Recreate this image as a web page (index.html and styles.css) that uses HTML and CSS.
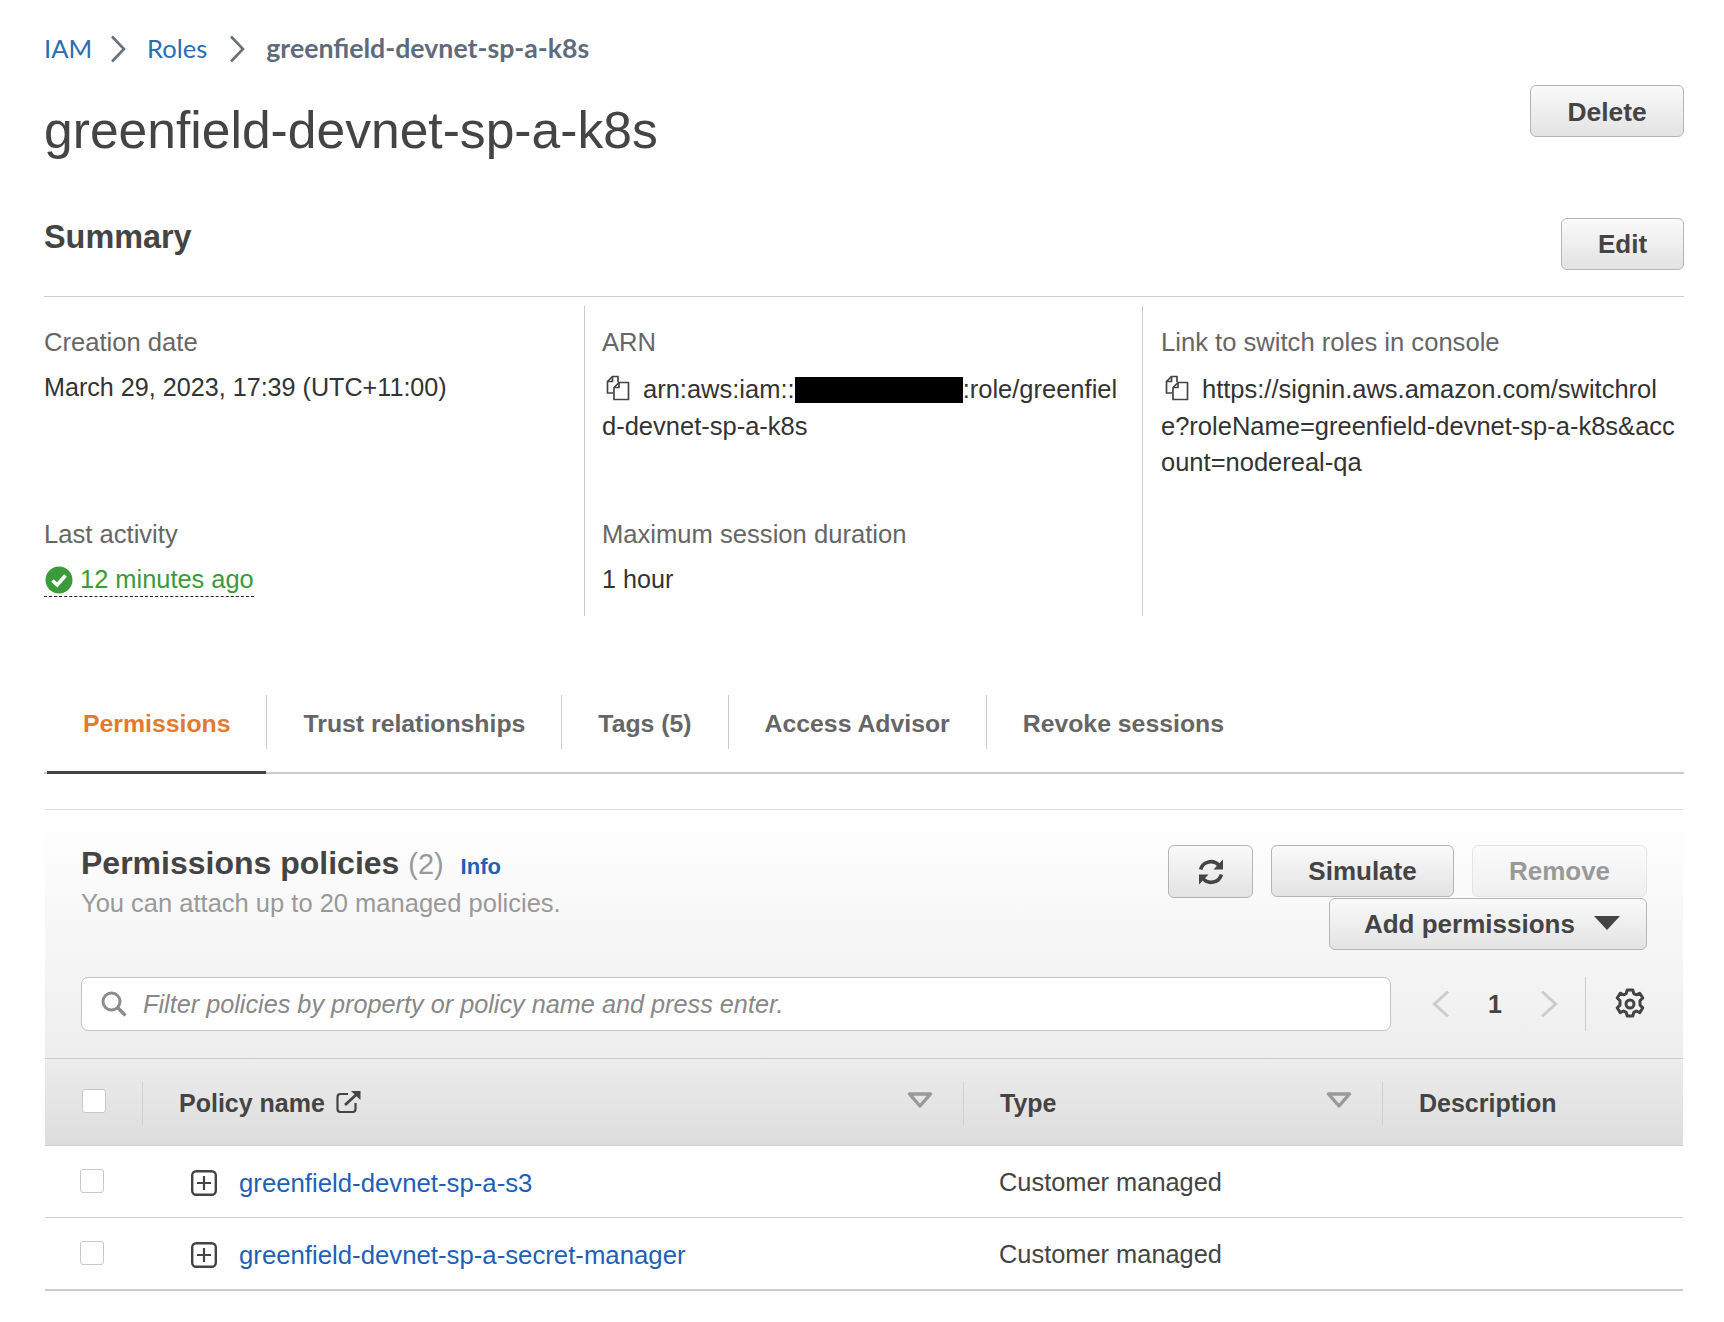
FILE: index.html
```html
<!DOCTYPE html>
<html lang="en">
<head>
  <meta charset="UTF-8" />
  <title>greenfield-devnet-sp-a-k8s</title>
  <link rel="stylesheet" href="styles.css">
</head>
<body>
  <nav class="crumbs">
    <a class="crumb-first" href="#">IAM</a>
    <svg class="crumb-sep" viewBox="0 0 16 28"><path d="M2 1.5 14 14 2 26.5" /></svg>
    <a class="crumb-mid" href="#">Roles</a>
    <svg class="crumb-sep" viewBox="0 0 16 28"><path d="M2 1.5 14 14 2 26.5" /></svg>
    <span class="crumb-current">greenfield-devnet-sp-a-k8s</span>
  </nav>

  <div class="title-row">
    <h1>greenfield-devnet-sp-a-k8s</h1>
    <button class="btn btn-delete">Delete</button>
  </div>

  <div class="summary-head">
    <h2>Summary</h2>
    <button class="btn btn-edit">Edit</button>
  </div>

  <div class="summary">
    <div class="col">
      <div class="item">
        <div class="label">Creation date</div>
        <div class="value">March 29, 2023, 17:39 (UTC+11:00)</div>
      </div>
      <div class="item">
        <div class="label">Last activity</div>
        <div class="value value-activity">
          <span class="activity">
            <svg class="check" viewBox="0 0 28 28"><circle cx="14" cy="14" r="13.5" fill="#3b9a3a" /><path d="M7.5 14.5 12.2 19 20.5 9.5" fill="none" stroke="#fff" stroke-width="3.6" /></svg>
            12 minutes ago
          </span>
        </div>
      </div>
    </div>
    <div class="col col-mid">
      <div class="item">
        <div class="label">ARN</div>
        <div class="value value-wrap">
          <svg class="copy" viewBox="0 0 25 26"><use href="#copy-icon" /></svg>arn:aws:iam::<span class="redacted"></span>:role/greenfield-devnet-sp-a-k8s
        </div>
      </div>
      <div class="item">
        <div class="label">Maximum session duration</div>
        <div class="value">1 hour</div>
      </div>
    </div>
    <div class="col col-last">
      <div class="item">
        <div class="label">Link to switch roles in console</div>
        <div class="value value-wrap">
          <svg class="copy" viewBox="0 0 25 26"><use href="#copy-icon" /></svg>https://signin.aws.amazon.com/switchrole?roleName=greenfield-devnet-sp-a-k8s&amp;account=nodereal-qa
        </div>
      </div>
    </div>
  </div>

  <div class="tabs">
    <a class="tab active" href="#">Permissions</a>
    <a class="tab" href="#">Trust relationships</a>
    <a class="tab" href="#">Tags (5)</a>
    <a class="tab" href="#">Access Advisor</a>
    <a class="tab tab-last" href="#">Revoke sessions</a>
  </div>

  <section class="panel">
    <div class="panel-head">
      <div class="panel-top">
        <div class="panel-title">
          <h3>Permissions policies <span class="count">(2)</span> <a class="info" href="#">Info</a></h3>
          <p>You can attach up to 20 managed policies.</p>
        </div>
        <div class="actions">
          <button class="btn btn-refresh" aria-label="Refresh">
            <svg viewBox="0 0 28 28"><path d="M3.6 11.5A10.6 10.6 0 0 1 22 7.6M24.4 16.5A10.6 10.6 0 0 1 6 20.4" fill="none" stroke="#444" stroke-width="3.6" /><path d="M26 1.5V11.5H16.5ZM2 26.5V16.5H11.5Z" fill="#444" /></svg>
          </button>
          <button class="btn btn-simulate">Simulate</button>
          <button class="btn btn-remove" disabled>Remove</button>
          <button class="btn btn-add">Add permissions <span class="caret"></span></button>
        </div>
      </div>

      <div class="filter-row">
        <div class="filter">
          <svg class="search" viewBox="0 0 26 26"><circle cx="10.5" cy="10.5" r="8.5" fill="none" stroke="#8c8c8c" stroke-width="3" /><path d="M16.5 16.5 24.5 24.5" stroke="#8c8c8c" stroke-width="3.4" /></svg>
          <span class="placeholder">Filter policies by property or policy name and press enter.</span>
        </div>
        <div class="pager">
          <svg class="pager-arrow" viewBox="0 0 18 28"><path d="M16 1.5 2.5 14 16 26.5" /></svg>
          <span class="page-num">1</span>
          <svg class="pager-arrow" viewBox="0 0 18 28"><path d="M2 1.5 15.5 14 2 26.5" /></svg>
        </div>
        <div class="settings">
          <svg viewBox="0 0 30 32"><path d="M12.2 2h5.6l1 3.6 2.6 1.2 3.4-1.6 3 4.8-2.8 2.6v4.6l2.8 2.6-3 4.8-3.4-1.6-2.6 1.4-1 3.6h-5.6l-1-3.6-2.6-1.4-3.4 1.6-3-4.8 2.8-2.6v-4.6l-2.8-2.6 3-4.8 3.4 1.6 2.6-1.2z" fill="none" stroke="#444" stroke-width="3" stroke-linejoin="round" /><circle cx="15" cy="16" r="4" fill="none" stroke="#444" stroke-width="3" /></svg>
        </div>
      </div>
    </div>

    <div class="table">
      <div class="thead">
        <div class="th th-check"><span class="checkbox"></span></div>
        <div class="th th-sep">
          <span class="th-name">Policy name
            <svg class="ext" viewBox="0 0 25 23"><path d="M12 4H4.5A3 3 0 0 0 1.5 7v12a3 3 0 0 0 3 3h12a3 3 0 0 0 3-3v-6" fill="none" stroke="#444" stroke-width="2.2" /><path d="M9 15 21 4" fill="none" stroke="#444" stroke-width="2.8" /><path d="M15 1h9.5v9z" fill="#444" /></svg>
          </span>
          <svg class="sort" viewBox="0 0 26 16"><path d="M2.5 2h21L13 14z" fill="none" stroke="#999" stroke-width="3.4" stroke-linejoin="round" /></svg>
        </div>
        <div class="th th-sep">Type <svg class="sort" viewBox="0 0 26 16"><path d="M2.5 2h21L13 14z" fill="none" stroke="#999" stroke-width="3.4" stroke-linejoin="round" /></svg></div>
        <div class="th th-sep">Description</div>
      </div>

      <div class="row">
        <div class="td-check"><span class="checkbox"></span></div>
        <div class="td-name">
          <svg class="expand" viewBox="0 0 26 26"><use href="#plus-icon" /></svg>
          <a href="#">greenfield-devnet-sp-a-s3</a>
        </div>
        <div class="td-type">Customer managed</div>
        <div></div>
      </div>
      <div class="row row-last">
        <div class="td-check"><span class="checkbox"></span></div>
        <div class="td-name">
          <svg class="expand" viewBox="0 0 26 26"><use href="#plus-icon" /></svg>
          <a href="#">greenfield-devnet-sp-a-secret-manager</a>
        </div>
        <div class="td-type">Customer managed</div>
        <div></div>
      </div>
    </div>
  </section>

  <svg class="defs" width="0" height="0">
    <defs>
      <g id="copy-icon" fill="none" stroke="#444" stroke-width="1.7" stroke-linejoin="round">
        <path d="M8 18H2.5V6.5L7.5 1.5H13V7" />
        <path d="M7.5 1.5V6.5H2.5" />
        <path d="M9 12.5 14 7.5H23.5V24.5H9Z" />
        <path d="M14 7.5V12.5H9" />
      </g>
      <g id="plus-icon" fill="none" stroke="#444">
        <rect x="1.2" y="1.2" width="23.6" height="23.6" rx="4" stroke-width="2.4" />
        <path d="M13 6V20M6 13H20" stroke-width="2.2" />
      </g>
    </defs>
  </svg>
</body>
</html>
```

FILE: styles.css
```css
* {
  box-sizing: border-box;
}

body {
  margin: 0;
  padding: 29px 40px 32px 44px;
  background: #fff;
  color: #444;
  font-family: "Liberation Sans", Arial, sans-serif;
  font-size: 25px;
}

a {
  text-decoration: none;
}

.defs {
  position: absolute;
}

/* Breadcrumbs */
.crumbs {
  display: flex;
  align-items: center;
  height: 38px;
  font-family: Lato, "Noto Sans", sans-serif;
  font-size: 25.5px;
}

.crumbs a {
  color: #2a6cb5;
}

.crumb-first {
  margin-right: -2px;
}

.crumb-mid {
  margin-right: 2px;
}

.crumb-sep {
  width: 16px;
  height: 28px;
  margin: 1px 21px 0 20px;
  fill: none;
  stroke: #687078;
  stroke-width: 2.6;
}

.crumb-current {
  color: #5f6b7a;
  font-size: 26.7px;
  font-weight: bold;
}

/* Title */
.title-row {
  display: flex;
  justify-content: space-between;
  align-items: flex-start;
  height: 133px;
  margin-top: 18px;
}

h1 {
  margin: 15px 0 0;
  font-size: 51.6px;
  line-height: 60px;
  font-weight: normal;
  color: #444;
}

.btn {
  height: 52px;
  padding: 0;
  border: 1px solid #b5b5b5;
  border-radius: 6px;
  background: linear-gradient(#fafafa, #e3e3e3);
  color: #444;
  font-family: inherit;
  font-size: 26px;
  font-weight: bold;
}

.btn-delete {
  width: 154px;
  padding-top: 2px;
  font-size: 26.4px;
}

.btn-edit {
  width: 123px;
}

.summary-head {
  display: flex;
  justify-content: space-between;
  align-items: flex-start;
  height: 79px;
  padding-bottom: 26px;
  border-bottom: 1px solid #ccc;
}

h2 {
  margin: 0;
  font-size: 32.4px;
  line-height: 39px;
  color: #444;
}

/* Summary columns */
.summary {
  display: grid;
  grid-template-columns: 541px 558px 1fr;
  height: 310px;
  margin-top: 9px;
}

.col {
  padding: 18px 17px 0 0;
  border-right: 1px solid #ccc;
}

.col-mid {
  padding-left: 17px;
  padding-right: 16px;
}

.col-last {
  padding-left: 18px;
  padding-right: 6px;
  border-right: none;
}

.item {
  height: 192px;
}

.item:last-child {
  height: auto;
}

.col-last .item {
  height: auto;
}

.label {
  margin-bottom: 9px;
  color: #666;
  font-size: 25.6px;
  line-height: 36px;
}

.value {
  color: #333;
  font-size: 25.15px;
  line-height: 36.5px;
}

.value-activity {
  font-size: 25.4px;
}

.value-wrap {
  margin-top: 11px;
  font-size: 25.5px;
  word-break: break-all;
}

.copy {
  width: 25px;
  height: 26px;
  margin: 0 13px 0 3px;
  vertical-align: -3px;
}

.redacted {
  display: inline-block;
  width: 168px;
  height: 26px;
  background: #000;
  vertical-align: -5px;
}

.activity {
  display: inline-block;
  height: 36px;
  color: #3b9a3a;
  border-bottom: 1px dashed #222;
}

.check {
  width: 28px;
  height: 28px;
  margin-left: 1px;
  vertical-align: -6px;
}

/* Tabs */
.tabs {
  display: flex;
  margin-top: 79px;
  padding: 0 0 23px 3px;
  border-bottom: 2px solid #ccc;
}

.tab {
  position: relative;
  height: 54px;
  padding: 0 36px;
  border-right: 1px solid #ccc;
  color: #666;
  font-size: 24.8px;
  font-weight: bold;
  line-height: 58px;
}

.tab.active {
  color: #e07b30;
}

.tab.active::after {
  content: "";
  position: absolute;
  left: 0;
  right: 0;
  bottom: -25px;
  height: 3px;
  background: #444;
}

.tab-last {
  border-right: none;
}

/* Permissions panel */
.panel {
  margin: 35px 1px 0;
}

.panel-head {
  padding: 35px 36px 27px;
  border-top: 1px solid #ddd;
  background: linear-gradient(#fff, #eee);
}

.panel-top {
  display: flex;
  justify-content: space-between;
  align-items: flex-start;
}

.panel-title h3 {
  margin: 0;
  font-size: 32px;
  line-height: 36px;
  color: #444;
}

.count {
  color: #999;
  font-size: 29px;
  font-weight: normal;
}

.info {
  margin-left: 8px;
  color: #1f5fb8;
  font-size: 22px;
}

.panel-title p {
  margin: 0;
  color: #999;
  font-size: 25.5px;
  line-height: 36px;
}

.actions {
  display: flex;
  flex-wrap: wrap;
  justify-content: flex-end;
  align-items: flex-start;
  column-gap: 18px;
  width: 479px;
}

.btn-refresh {
  display: flex;
  justify-content: center;
  align-items: center;
  width: 85px;
  height: 53px;
}

.btn-refresh svg {
  width: 28px;
  height: 28px;
}

.btn-simulate {
  width: 183px;
}

.btn-remove {
  width: 175px;
  border-color: #e4e4e4;
  color: #999;
  background: linear-gradient(#fbfbfb, #efefef);
}

.btn-add {
  width: 318px;
  padding-left: 8px;
}

.caret {
  display: inline-block;
  width: 0;
  height: 0;
  margin-left: 12px;
  border-style: solid;
  border-width: 14px 13px 0;
  border-color: #444 transparent transparent;
  vertical-align: 3px;
}

.filter-row {
  display: flex;
  align-items: center;
  height: 54px;
  margin-top: 27px;
}

.filter {
  display: flex;
  align-items: center;
  width: 1310px;
  height: 54px;
  padding-left: 19px;
  border: 1px solid #c4c4c4;
  border-radius: 7px;
  background: #fff;
  font-size: 25.25px;
}

.search {
  width: 26px;
  height: 26px;
  margin-right: 16px;
}

.placeholder {
  color: #888;
  font-style: italic;
}

.pager {
  display: flex;
  align-items: center;
  width: 195px;
  height: 54px;
  padding-left: 41px;
  border-right: 1px solid #ccc;
}

.pager-arrow {
  width: 18px;
  height: 28px;
  fill: none;
  stroke: #ccc;
  stroke-width: 3;
}

.page-num {
  width: 90px;
  color: #444;
  font-weight: bold;
  text-align: center;
}

.settings {
  display: flex;
  padding-left: 29px;
}

.settings svg {
  width: 30px;
  height: 32px;
}

/* Table */
.thead,
.row {
  display: grid;
  grid-template-columns: 97px 821px 419px 1fr;
}

.thead {
  align-items: center;
  height: 88px;
  border-top: 1px solid #ccc;
  border-bottom: 1px solid #ccc;
  background: linear-gradient(#ececec, #ddd);
}

.th {
  display: flex;
  justify-content: space-between;
  align-items: center;
  height: 43px;
  margin-top: 2px;
  padding: 0 30px 0 36px;
  color: #444;
  font-weight: bold;
}

.th-check {
  padding-left: 37px;
  margin-top: -2px;
}

.th-sep {
  border-left: 1px solid #d0d0d0;
}

.th-name {
  display: flex;
  align-items: center;
  gap: 11px;
}

.ext {
  width: 25px;
  height: 23px;
  margin-top: -3px;
}

.sort {
  width: 26px;
  height: 16px;
  margin-top: -6px;
}

.checkbox {
  display: block;
  width: 24px;
  height: 24px;
  border: 1px solid #c8c8c8;
  border-radius: 3px;
  background: #fff;
}

.row {
  align-items: center;
  height: 72px;
  border-bottom: 1px solid #ccc;
}

.row-last {
  height: 73px;
  border-bottom-width: 2px;
}

.td-check {
  padding-left: 35px;
  margin-top: -2px;
}

.td-name {
  display: flex;
  align-items: center;
  gap: 22px;
  padding-top: 4px;
  padding-left: 49px;
  font-size: 25.75px;
}

.td-name a {
  color: #1f5fb8;
}

.expand {
  width: 26px;
  height: 26px;
  margin-top: -2px;
}

.td-type {
  padding-top: 2px;
  padding-left: 36px;
  color: #444;
  font-size: 25.4px;
}
```
